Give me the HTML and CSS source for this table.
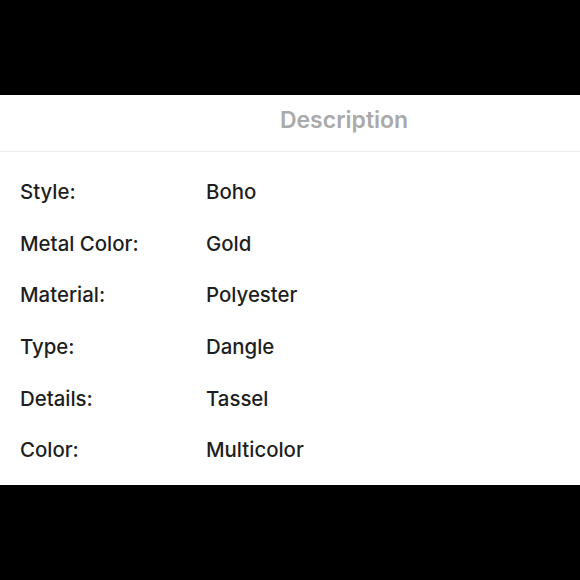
FILE: index.html
```html
<!DOCTYPE html>
<html>
<head>
<meta charset="utf-8">
<link rel="stylesheet" href="styles.css">
</head>
<body>
<div class="screen">
  <div class="bar"></div>
  <div class="sheet">
    <div class="header"><span class="title">Description</span></div>
    <div class="list">
      <div class="row"><span class="label">Style:</span><span class="value">Boho</span></div>
      <div class="row"><span class="label">Metal Color:</span><span class="value">Gold</span></div>
      <div class="row"><span class="label">Material:</span><span class="value">Polyester</span></div>
      <div class="row"><span class="label">Type:</span><span class="value">Dangle</span></div>
      <div class="row"><span class="label">Details:</span><span class="value">Tassel</span></div>
      <div class="row"><span class="label">Color:</span><span class="value">Multicolor</span></div>
    </div>
  </div>
  <div class="bar"></div>
</div>
</body>
</html>
```
FILE: styles.css
```css
html, body {
  margin: 0;
  padding: 0;
  background: #000;
}
.screen {
  width: 580px;
  height: 580px;
  display: flex;
  flex-direction: column;
  font-family: Inter, "Noto Sans", sans-serif;
}
.bar {
  height: 95px;
  background: #000;
  flex: none;
}
.sheet {
  height: 390px;
  background: #fff;
  display: flex;
  flex-direction: column;
}
.header {
  height: 57px;
  border-bottom: 1px solid #ececec;
  display: flex;
  align-items: center;
  justify-content: center;
  padding-left: 108px;
  box-sizing: border-box;
}
.title {
  font-size: 23px;
  font-weight: 600;
  color: #aaaaaa;
  margin-top: -6px;
}
.list {
  padding: 14px 0 8px 20px;
}
.row {
  height: 51.6px;
  display: flex;
  align-items: center;
  font-size: 20.4px;
  font-weight: 500;
  color: #1e1e1e;
}
.label {
  width: 186px;
}
```
